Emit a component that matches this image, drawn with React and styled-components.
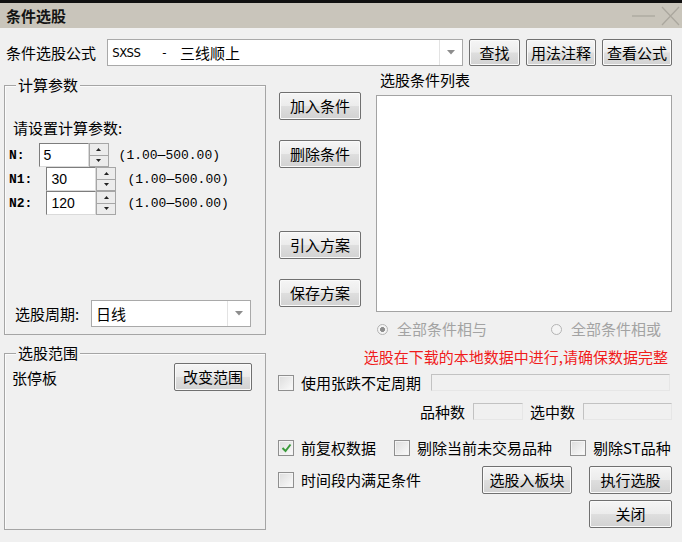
import React from 'react';
import styled, { createGlobalStyle } from 'styled-components';

const GlobalStyle = createGlobalStyle`
  * { box-sizing: border-box; }
  html, body { margin: 0; padding: 0; background: #f0f0f0; }
  body {
    font-family: "Noto Sans CJK SC", "Noto Sans", sans-serif;
    font-size: 15px;
    color: #000;
  }
`;

const Window = styled.div`
  width: 682px;
  height: 542px;
  display: flex;
  flex-direction: column;
  background: #f0f0f0;
  overflow: hidden;
`;

const TopEdge = styled.div`
  height: 3px;
  background: #101010;
`;

const TitleBar = styled.div`
  height: 25px;
  background: #c9c5bb;
  display: flex;
  align-items: center;
  justify-content: space-between;
  padding: 0 2px 0 6px;
`;

const Title = styled.span`
  font-size: 15px;
  font-weight: 700;
  color: #141414;
  line-height: 18px;
`;

const Body = styled.div`
  flex: 1;
  display: flex;
  flex-direction: column;
  padding: 11px 10px 0 4px;
`;

const FormulaRow = styled.div`
  display: flex;
  align-items: center;
  gap: 6px;
  height: 27px;
`;

const FormulaLabel = styled.span`
  width: 96px;
  margin-left: 2px;
  line-height: 18px;
  white-space: nowrap;
`;

const Combo = styled.div`
  width: ${(p) => p.$w}px;
  height: ${(p) => p.$h}px;
  display: flex;
  background: #fff;
  border: 1px solid #a9a9a9;
`;

const ComboText = styled.div`
  flex: 1;
  display: flex;
  align-items: center;
  padding-left: ${(p) => p.$pl || 4}px;
  line-height: 18px;
  white-space: nowrap;
`;

const Code = styled.span`
  font-family: "Liberation Sans Narrow", "DejaVu Sans Condensed", "Liberation Sans", sans-serif;
  font-size: 13px;
  letter-spacing: -0.6px;
  margin-right: ${(p) => p.$gap || 0}px;
`;

const ComboArrow = styled.div`
  width: 23px;
  display: flex;
  align-items: center;
  justify-content: center;
  border-left: 1px solid #e3e3e3;
`;

const Button = styled.button`
  width: ${(p) => p.$w || 82}px;
  height: ${(p) => p.$h || 28}px;
  margin-top: ${(p) => p.$mt || 0}px;
  margin-left: ${(p) => p.$ml || 0}px;
  padding: 0;
  font-family: inherit;
  font-size: 15px;
  line-height: 18px;
  color: #000;
  border: 1px solid #707070;
  border-radius: 2px;
  background: linear-gradient(#f5f5f5 0%, #ececec 48%, #dedede 52%, #d2d2d2 100%);
  box-shadow: inset 0 0 0 1px #fafafa;
  flex-shrink: 0;
`;

const Main = styled.div`
  display: flex;
  gap: 13px;
  margin-top: 5px;
`;

const LeftCol = styled.div`
  width: 262px;
  display: flex;
  flex-direction: column;
  gap: 18px;
  padding-top: 14px;
`;

const Group = styled.div`
  height: ${(p) => p.$h}px;
  border: 1px solid #a5a5a5;
  box-shadow: inset 1px 1px 0 #fbfbfb;
  padding: 0 13px 7px 3px;
  display: flex;
  flex-direction: column;
`;

const Legend = styled.span`
  align-self: flex-start;
  margin: -10px 0 0 8px;
  padding: 0 2px;
  background: #f0f0f0;
  line-height: 18px;
`;

const ParamHeading = styled.div`
  margin: 24px 0 5px 5px;
  line-height: 20px;
`;

const ParamRow = styled.div`
  display: flex;
  align-items: center;
  height: 24px;
`;

const ParamName = styled.span`
  font-family: "Liberation Mono", monospace;
  font-size: 13px;
  font-weight: 700;
  margin: 0 14px 0 1px;
`;

const NumInput = styled.div`
  width: 50px;
  height: 24px;
  display: flex;
  align-items: center;
  padding-left: 4px;
  background: #fff;
  border: 1px solid;
  border-color: #7d7d7d #dadada #dadada #7d7d7d;
  font-family: "Liberation Sans", sans-serif;
  font-size: 14px;
`;

const Spinner = styled.div`
  width: 20px;
  height: 24px;
  display: flex;
  flex-direction: column;
  border: 1px solid #a6a6a6;
  background: #ececec;
`;

const SpinHalf = styled.div`
  flex: 1;
  display: flex;
  align-items: center;
  justify-content: center;
  & + & {
    border-top: 1px solid #a6a6a6;
  }
`;

const Range = styled.span`
  font-family: "Liberation Mono", monospace;
  font-size: 13px;
  margin-left: ${(p) => p.$ml}px;
  white-space: pre;
`;

const Spacer = styled.div`
  flex: 1;
`;

const PeriodRow = styled.div`
  display: flex;
  align-items: center;
  gap: 4px;
  padding-left: 7px;
`;

const PeriodLabel = styled.span`
  line-height: 18px;
  width: 72px;
`;

const RangeRow = styled.div`
  display: flex;
  align-items: center;
  justify-content: space-between;
  margin-top: 1px;
  padding-left: 4px;
`;

const RightCol = styled.div`
  width: 393px;
  display: flex;
  flex-direction: column;
`;

const RowA = styled.div`
  display: flex;
  gap: 15px;
  height: 241px;
`;

const ButtonStack = styled.div`
  width: 82px;
  display: flex;
  flex-direction: column;
  padding-top: 21px;
`;

const ListCol = styled.div`
  width: 296px;
  display: flex;
  flex-direction: column;
`;

const ListLabel = styled.div`
  line-height: 18px;
  margin: 0 0 6px 4px;
`;

const ListBox = styled.div`
  flex: 1;
  background: #fff;
  border: 1px solid #a3a3a3;
`;

const RadioRow = styled.div`
  display: flex;
  align-items: center;
  gap: 64px;
  height: 18px;
  margin-top: 8px;
  padding-left: 98px;
`;

const RadioOption = styled.span`
  display: flex;
  align-items: center;
  gap: 9px;
  color: #a3a3a3;
  line-height: 18px;
`;

const RadioDot = styled.span`
  width: 11px;
  height: 11px;
  border-radius: 50%;
  border: 1px solid #b4b4b4;
  background: radial-gradient(circle, ${(p) => (p.$on ? '#8e8e8e 0 2.2px, #f4f4f4 2.6px' : '#f4f4f4 0')});
`;

const RedNote = styled.div`
  margin-top: 10px;
  line-height: 18px;
  color: #f01c1c;
  text-align: right;
  padding-right: 4px;
  white-space: nowrap;
`;

const Line = styled.div`
  display: flex;
  align-items: center;
  height: ${(p) => p.$h || 18}px;
  margin-top: ${(p) => p.$mt || 0}px;
  justify-content: ${(p) => (p.$end ? 'flex-end' : 'flex-start')};
  gap: ${(p) => p.$gap || 0}px;
`;

const CheckItem = styled.span`
  display: flex;
  align-items: center;
  gap: 7px;
  line-height: 18px;
  white-space: nowrap;
`;

const CheckBox = styled.span`
  width: 16px;
  height: 16px;
  margin-left: -1px;
  display: flex;
  align-items: center;
  justify-content: center;
  border: 1px solid #8f8f8f;
  background: linear-gradient(135deg, #dcdcdc, #fbfbfb);
  box-shadow: inset 0 0 0 1px #f4f4f4;
`;

const Field = styled.div`
  width: ${(p) => p.$w}px;
  height: 17px;
  margin-left: ${(p) => p.$ml || 0}px;
  border: 1px solid;
  border-color: #c2c2c2 #e6e6e6 #e6e6e6 #c2c2c2;
  background: #f0f0f0;
`;

const CountLabel = styled.span`
  line-height: 18px;
  margin-left: ${(p) => p.$ml || 0}px;
`;

const ArrowDown = ({ color = '#8d8d8d' }) => (
  <svg width="8" height="5" viewBox="0 0 8 5">
    <path d="M0 0h8L4 4.5z" fill={color} />
  </svg>
);

const Tri = ({ up }) => (
  <svg width="5" height="3" viewBox="0 0 5 3">
    <path d={up ? 'M2.5 0L5 3H0z' : 'M0 0h5L2.5 3z'} fill="#222" />
  </svg>
);

const Spin = () => (
  <Spinner>
    <SpinHalf>
      <Tri up />
    </SpinHalf>
    <SpinHalf>
      <Tri />
    </SpinHalf>
  </Spinner>
);

const Check = ({ on }) => (
  <CheckBox>
    {on && (
      <svg width="11" height="10" viewBox="0 0 11 10">
        <path d="M1.5 5l3 3 5-6.5" stroke="#3a9a3a" strokeWidth="2" fill="none" />
      </svg>
    )}
  </CheckBox>
);

const params = [
  { name: 'N:', value: '5', ml: 10 },
  { name: 'N1:', value: '30', ml: 11 },
  { name: 'N2:', value: '120', ml: 11 },
];

export default function App() {
  return (
    <>
      <GlobalStyle />
      <Window>
        <TopEdge />
        <TitleBar>
          <Title>条件选股</Title>
          <svg width="48" height="22" viewBox="0 0 48 22">
            <path d="M0 11h23" stroke="#aba79e" strokeWidth="1.3" />
            <path d="M30 2l17 18M47 2L30 20" stroke="#aba79e" strokeWidth="1.3" />
          </svg>
        </TitleBar>
        <Body>
          <FormulaRow>
            <FormulaLabel>条件选股公式</FormulaLabel>
            <Combo $w={358} $h={27}>
              <ComboText $pl={4}>
                <Code $gap={22}>SXSS</Code>
                <Code $gap={14}>-</Code>
                <span>三线顺上</span>
              </ComboText>
              <ComboArrow>
                <ArrowDown />
              </ComboArrow>
            </Combo>
            <Button $w={51} $h={27}>查找</Button>
            <Button $w={70} $h={27}>用法注释</Button>
            <Button $w={70} $h={27}>查看公式</Button>
          </FormulaRow>

          <Main>
            <LeftCol>
              <Group $h={250}>
                <Legend>计算参数</Legend>
                <ParamHeading>请设置计算参数:</ParamHeading>
                {params.map((p) => (
                  <ParamRow key={p.name}>
                    <ParamName>{p.name}</ParamName>
                    <NumInput>{p.value}</NumInput>
                    <Spin />
                    <Range $ml={p.ml}>(1.00—500.00)</Range>
                  </ParamRow>
                ))}
                <Spacer />
                <PeriodRow>
                  <PeriodLabel>选股周期:</PeriodLabel>
                  <Combo $w={160} $h={27}>
                    <ComboText>日线</ComboText>
                    <ComboArrow>
                      <ArrowDown />
                    </ComboArrow>
                  </Combo>
                </PeriodRow>
              </Group>
              <Group $h={177}>
                <Legend>选股范围</Legend>
                <RangeRow>
                  <span>张停板</span>
                  <Button $w={78}>改变范围</Button>
                </RangeRow>
              </Group>
            </LeftCol>

            <RightCol>
              <RowA>
                <ButtonStack>
                  <Button>加入条件</Button>
                  <Button $mt={20}>删除条件</Button>
                  <Button $mt={63}>引入方案</Button>
                  <Button $mt={20}>保存方案</Button>
                </ButtonStack>
                <ListCol>
                  <ListLabel>选股条件列表</ListLabel>
                  <ListBox />
                </ListCol>
              </RowA>

              <RadioRow>
                <RadioOption>
                  <RadioDot $on />
                  全部条件相与
                </RadioOption>
                <RadioOption>
                  <RadioDot />
                  全部条件相或
                </RadioOption>
              </RadioRow>

              <RedNote>选股在下载的本地数据中进行,请确保数据完整</RedNote>

              <Line $mt={8} $h={17}>
                <CheckItem>
                  <Check />
                  使用张跌不定周期
                </CheckItem>
                <Field $w={239} $ml={10} />
              </Line>

              <Line $mt={12} $h={17} $end>
                <CountLabel>品种数</CountLabel>
                <Field $w={50} $ml={8} />
                <CountLabel $ml={7}>选中数</CountLabel>
                <Field $w={89} $ml={8} />
              </Line>

              <Line $mt={19} $gap={19}>
                <CheckItem>
                  <Check on />
                  前复权数据
                </CheckItem>
                <CheckItem>
                  <Check />
                  剔除当前未交易品种
                </CheckItem>
                <CheckItem>
                  <Check />
                  剔除ST品种
                </CheckItem>
              </Line>

              <Line $mt={9} $h={28}>
                <CheckItem>
                  <Check />
                  时间段内满足条件
                </CheckItem>
                <Spacer />
                <Button $w={90}>选股入板块</Button>
                <Button $w={83} $ml={17}>执行选股</Button>
              </Line>

              <Line $mt={6} $h={28} $end>
                <Button $w={83}>关闭</Button>
              </Line>
            </RightCol>
          </Main>
        </Body>
      </Window>
    </>
  );
}
